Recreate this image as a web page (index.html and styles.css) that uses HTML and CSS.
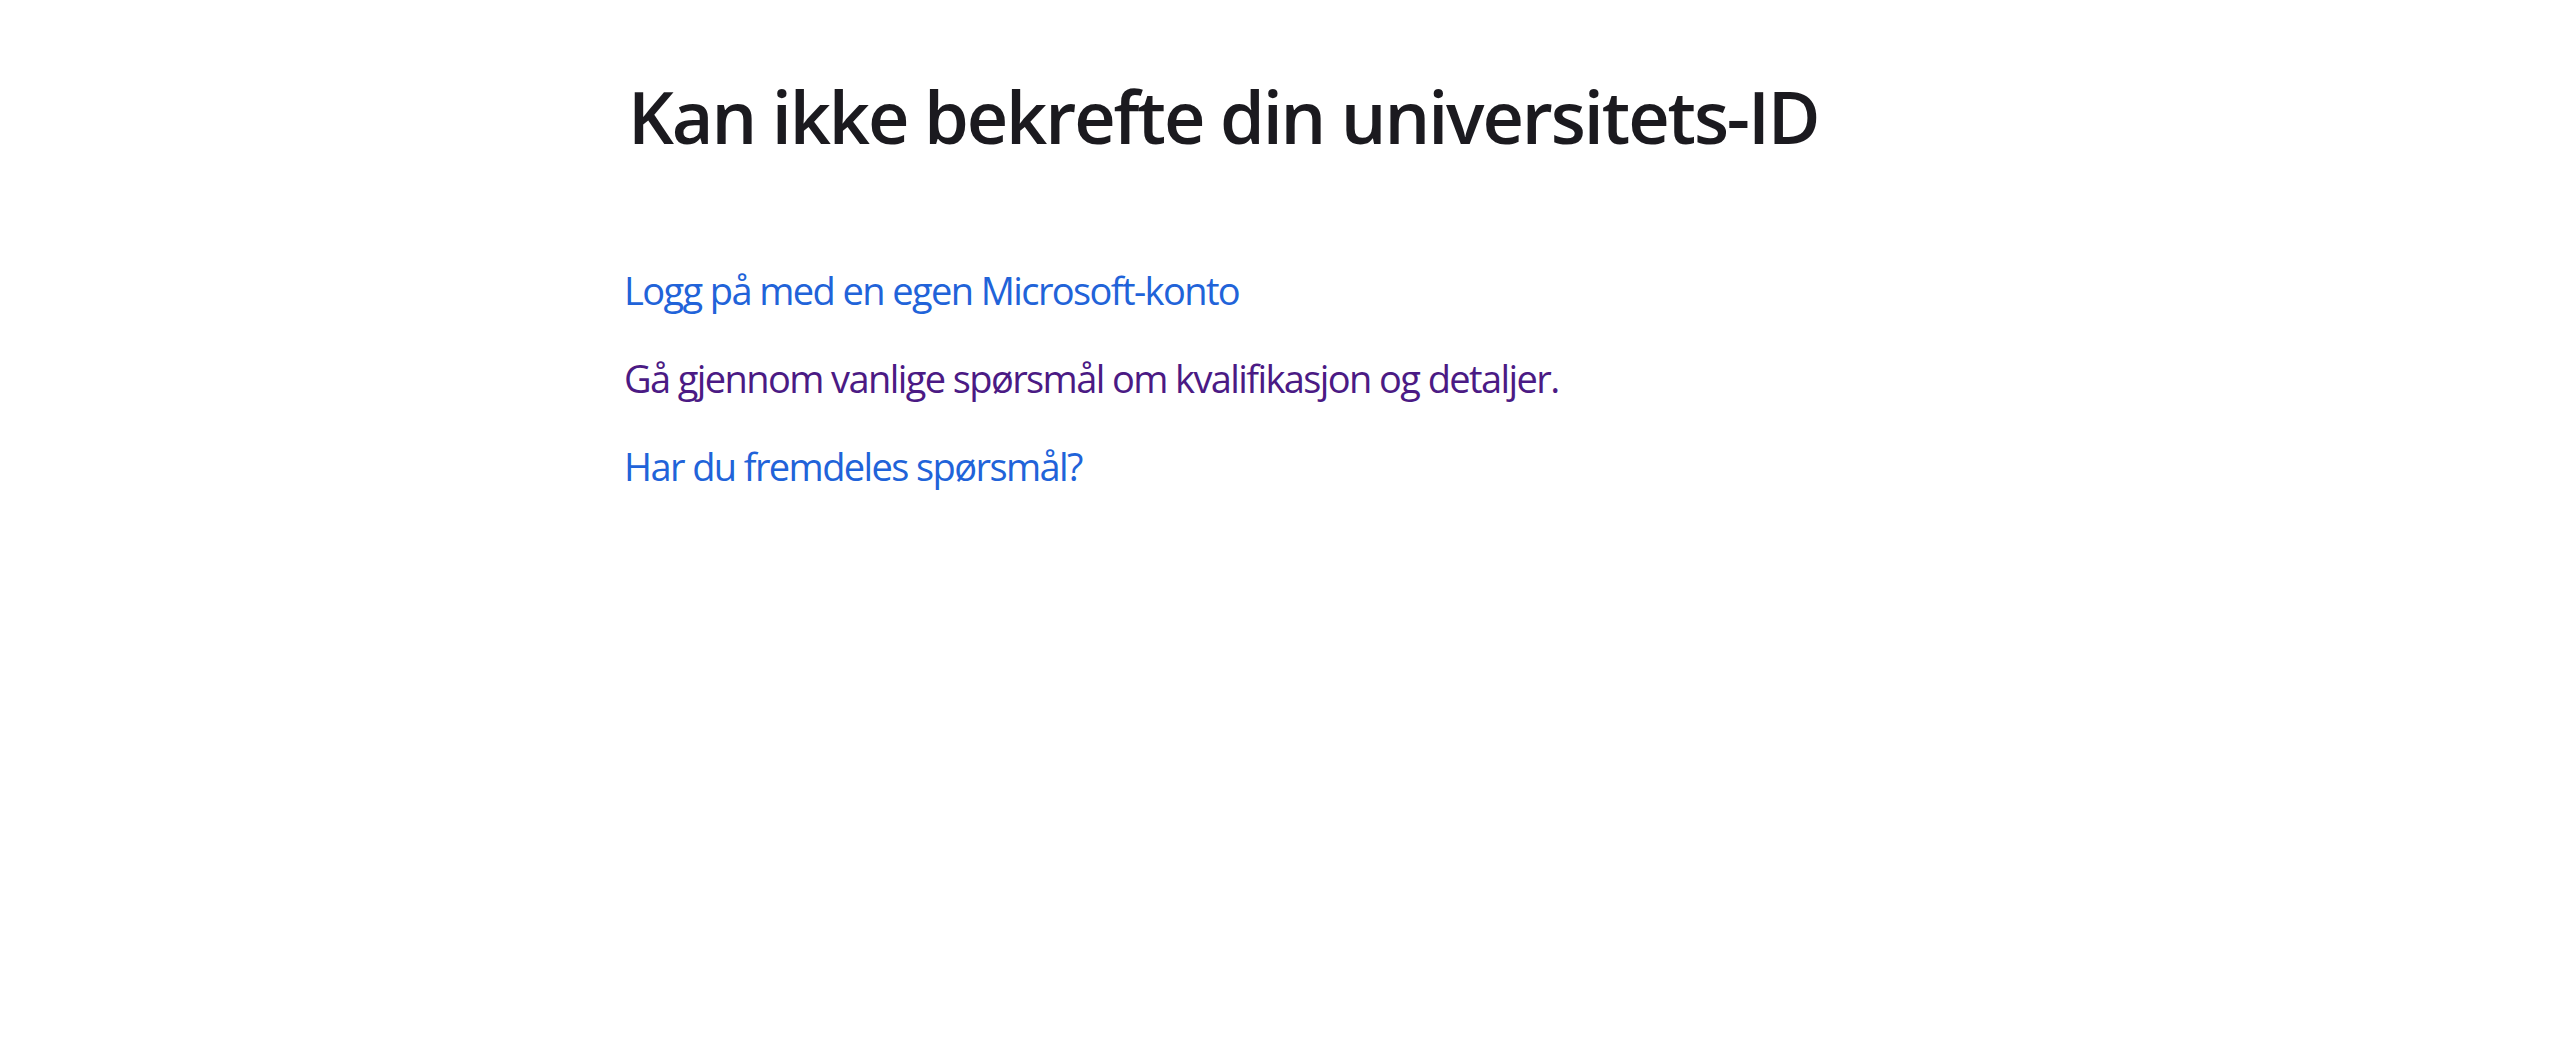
FILE: index.html
```html
<!DOCTYPE html>
<html lang="nb">
<head>
  <meta charset="UTF-8" />
  <title>Kan ikke bekrefte din universitets-ID</title>
  <link rel="stylesheet" href="styles.css">
</head>
<body>
  <main class="page">
    <h1 class="title">Kan ikke bekrefte din universitets-ID</h1>

    <ul class="links">
      <li><a href="#" class="link">Logg på med en egen Microsoft-konto</a></li>
      <li><a href="#" class="link visited">Gå gjennom vanlige spørsmål om kvalifikasjon og detaljer.</a></li>
      <li><a href="#" class="link">Har du fremdeles spørsmål?</a></li>
    </ul>
  </main>
</body>
</html>
```

FILE: styles.css
```css
body {
  margin: 0;
  font-family: "Segoe UI", "Open Sans", "Noto Sans", sans-serif;
  background: #ffffff;
  color: #1b1a1f;
}

.page {
  width: 1312px;
  margin: 0 auto;
  padding-top: 66px;
}

.title {
  font-size: 72px;
  font-weight: 600;
  line-height: 100px;
  letter-spacing: -2.1px;
  margin: 0 0 0 4px;
}

.links {
  list-style: none;
  margin: 98px 0 0;
  padding: 0;
  display: flex;
  flex-direction: column;
  gap: 36px;
}

.link {
  font-size: 38px;
  line-height: 52px;
  letter-spacing: -1.6px;
  color: #2163d9;
  text-decoration: none;
}

.link.visited {
  color: #4b1a84;
}
```
